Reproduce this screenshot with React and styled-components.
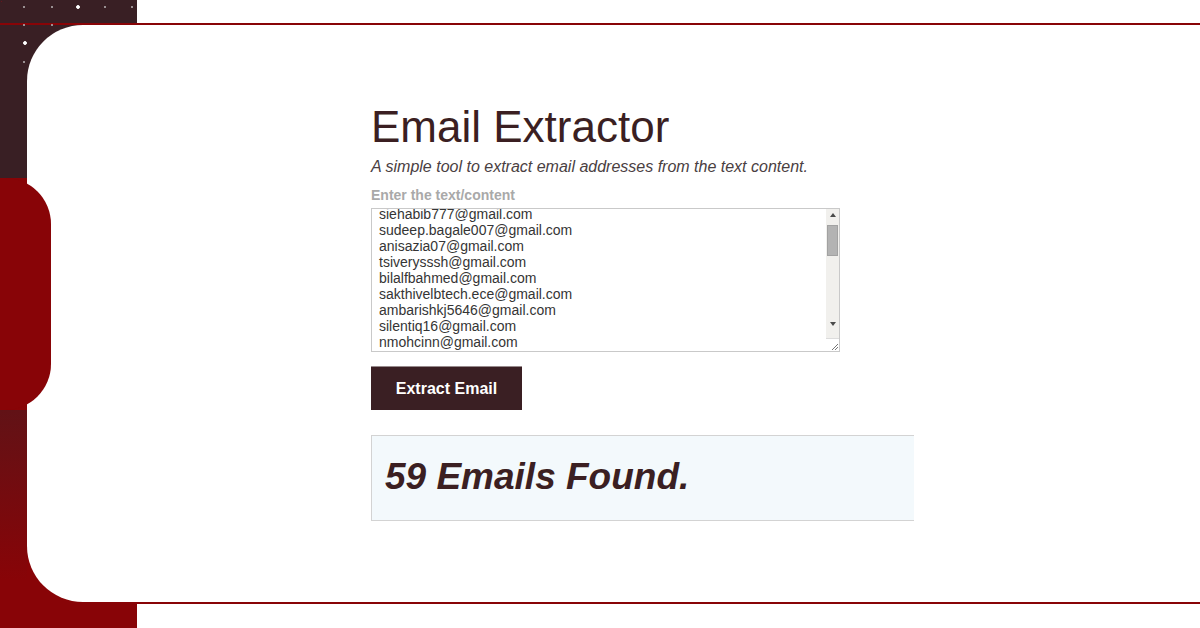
import { useEffect, useRef } from "react";
import styled, { createGlobalStyle } from "styled-components";

const emails = [
  "mdrasel.dev@gmail.com",
  "siehabib777@gmail.com",
  "sudeep.bagale007@gmail.com",
  "anisazia07@gmail.com",
  "tsiverysssh@gmail.com",
  "bilalfbahmed@gmail.com",
  "sakthivelbtech.ece@gmail.com",
  "ambarishkj5646@gmail.com",
  "silentiq16@gmail.com",
  "nmohcinn@gmail.com",
  "jeevanraj.k@gmail.com",
  "arifhossain22@gmail.com",
  "priyanka.s90@gmail.com",
];

const GlobalStyle = createGlobalStyle`
  html, body {
    margin: 0;
    padding: 0;
    background: #ffffff;
  }
  * {
    box-sizing: border-box;
  }
`;

const Stage = styled.div`
  width: 1200px;
  height: 628px;
  overflow: hidden;
  padding: 25px 0 0 27px;
  font-family: "Liberation Sans", Arial, sans-serif;
  background:
    radial-gradient(circle at 78px 7px, #ffffff 1.5px, transparent 2.2px),
    radial-gradient(circle at 25px 43px, #ffffff 1.5px, transparent 2.2px),
    radial-gradient(circle at 24px 7px, #9a8f91 0.8px, transparent 1.3px),
    radial-gradient(circle at 52px 7px, #9a8f91 0.8px, transparent 1.3px),
    radial-gradient(circle at 105px 7px, #9a8f91 0.8px, transparent 1.3px),
    radial-gradient(circle at 132px 7px, #9a8f91 0.8px, transparent 1.3px),
    radial-gradient(circle at 24px 25px, #9a8f91 0.8px, transparent 1.3px),
    radial-gradient(circle at 52px 25px, #9a8f91 0.8px, transparent 1.3px),
    radial-gradient(circle at 24px 62px, #9a8f91 0.8px, transparent 1.3px),
    linear-gradient(#880407, #880407) 0 23px / 100% 2px no-repeat,
    linear-gradient(#880407, #880407) 0 602px / 100% 2px no-repeat,
    radial-gradient(rgba(150, 10, 20, 0.5) 0.7px, transparent 1px) 0 0 / 3px 3px,
    linear-gradient(#391f24, #391f24) 0 0 / 137px 178px no-repeat,
    linear-gradient(rgba(59, 32, 37, 0.5), rgba(136, 4, 7, 0)) 0 410px / 27px 170px no-repeat,
    linear-gradient(#880407, #880407) 0 0 / 137px 100% no-repeat,
    #ffffff;
  background-repeat: no-repeat;
`;

const Card = styled.main`
  position: relative;
  width: 1173px;
  height: 577px;
  background: #ffffff;
  border-radius: 56px 0 0 56px;
  padding: 76px 0 0 344px;

  &::before {
    content: "";
    position: absolute;
    left: -27px;
    top: 153px;
    width: 51px;
    height: 232px;
    background: #880407;
    border-radius: 0 46px 46px 0;
  }
`;

const Title = styled.h1`
  margin: 0;
  font-size: 44px;
  line-height: 52px;
  font-weight: 400;
  color: #3b1f22;
`;

const Lead = styled.p`
  margin: 4px 0 0;
  font-size: 16px;
  line-height: 20px;
  font-style: italic;
  color: #4a4042;
`;

const Label = styled.label`
  display: block;
  margin-top: 10px;
  font-size: 14px;
  line-height: 16px;
  font-weight: 700;
  color: #a9a9a9;
`;

const Field = styled.div`
  position: relative;
  margin-top: 5px;
  width: 469px;
  height: 144px;
  border: 1px solid #c9c9c9;
  background: #ffffff;
`;

const Input = styled.textarea`
  display: block;
  width: 100%;
  height: 100%;
  border: 0;
  margin: 0;
  padding: 2px 20px 2px 7px;
  resize: none;
  outline: none;
  font-family: "Liberation Sans", Arial, sans-serif;
  font-size: 14px;
  line-height: 16px;
  color: #353535;
  background: transparent;
  overflow: hidden;
`;

const Rail = styled.div`
  position: absolute;
  top: 0;
  right: 0;
  bottom: 0;
  width: 13px;
  background: #f1f0ed;
  display: flex;
  flex-direction: column;
  align-items: center;
`;

const Arrow = styled.span`
  width: 0;
  height: 0;
  border-left: 3.5px solid transparent;
  border-right: 3.5px solid transparent;
  ${(p) =>
    p.$up
      ? "border-bottom: 4px solid #4a4a4a; margin-top: 4px;"
      : "border-top: 4px solid #4a4a4a; margin-top: 66px;"}
`;

const Thumb = styled.span`
  margin-top: 8px;
  width: 11px;
  height: 31px;
  background: #b3b3b3;
  border: 1px solid #a2a2a2;
`;

const Grip = styled.span`
  margin-top: auto;
  width: 13px;
  height: 13px;
  background: #ffffff;
  border-top: 1px solid #dcdcdc;
  display: flex;
  align-items: flex-end;
  justify-content: flex-end;
`;

const Button = styled.button`
  display: block;
  margin-top: 14px;
  width: 151px;
  height: 44px;
  border: 0;
  border-top: 1px solid #978a8c;
  background: #3a1f23;
  color: #ffffff;
  font-family: "Liberation Sans", Arial, sans-serif;
  font-size: 16px;
  font-weight: 700;
  cursor: pointer;
`;

const Result = styled.section`
  margin-top: 25px;
  width: 543px;
  height: 86px;
  border: 1px solid #d3d3d3;
  border-right: 0;
  background: #f3f9fc;
  display: flex;
  align-items: center;
  padding: 0 0 3px 13px;
`;

const Count = styled.h2`
  margin: 0;
  font-size: 37px;
  line-height: 1;
  font-weight: 700;
  font-style: italic;
  color: #3b1f22;
`;

export default function App() {
  const areaRef = useRef(null);

  useEffect(() => {
    if (areaRef.current) areaRef.current.scrollTop = 21;
  }, []);

  return (
    <>
      <GlobalStyle />
      <Stage>
        <Card>
          <Title>Email Extractor</Title>
          <Lead>A simple tool to extract email addresses from the text content.</Lead>
          <Label htmlFor="content">Enter the text/content</Label>
          <Field>
            <Input
              id="content"
              ref={areaRef}
              defaultValue={emails.join("\n")}
              spellCheck={false}
            />
            <Rail>
              <Arrow $up />
              <Thumb />
              <Arrow />
              <Grip>
                <svg width="9" height="9" viewBox="0 0 9 9">
                  <path d="M8 2 L2 8 M8 5 L5 8" stroke="#777" strokeWidth="1" />
                </svg>
              </Grip>
            </Rail>
          </Field>
          <Button type="button">Extract Email</Button>
          <Result>
            <Count>59 Emails Found.</Count>
          </Result>
        </Card>
      </Stage>
    </>
  );
}
